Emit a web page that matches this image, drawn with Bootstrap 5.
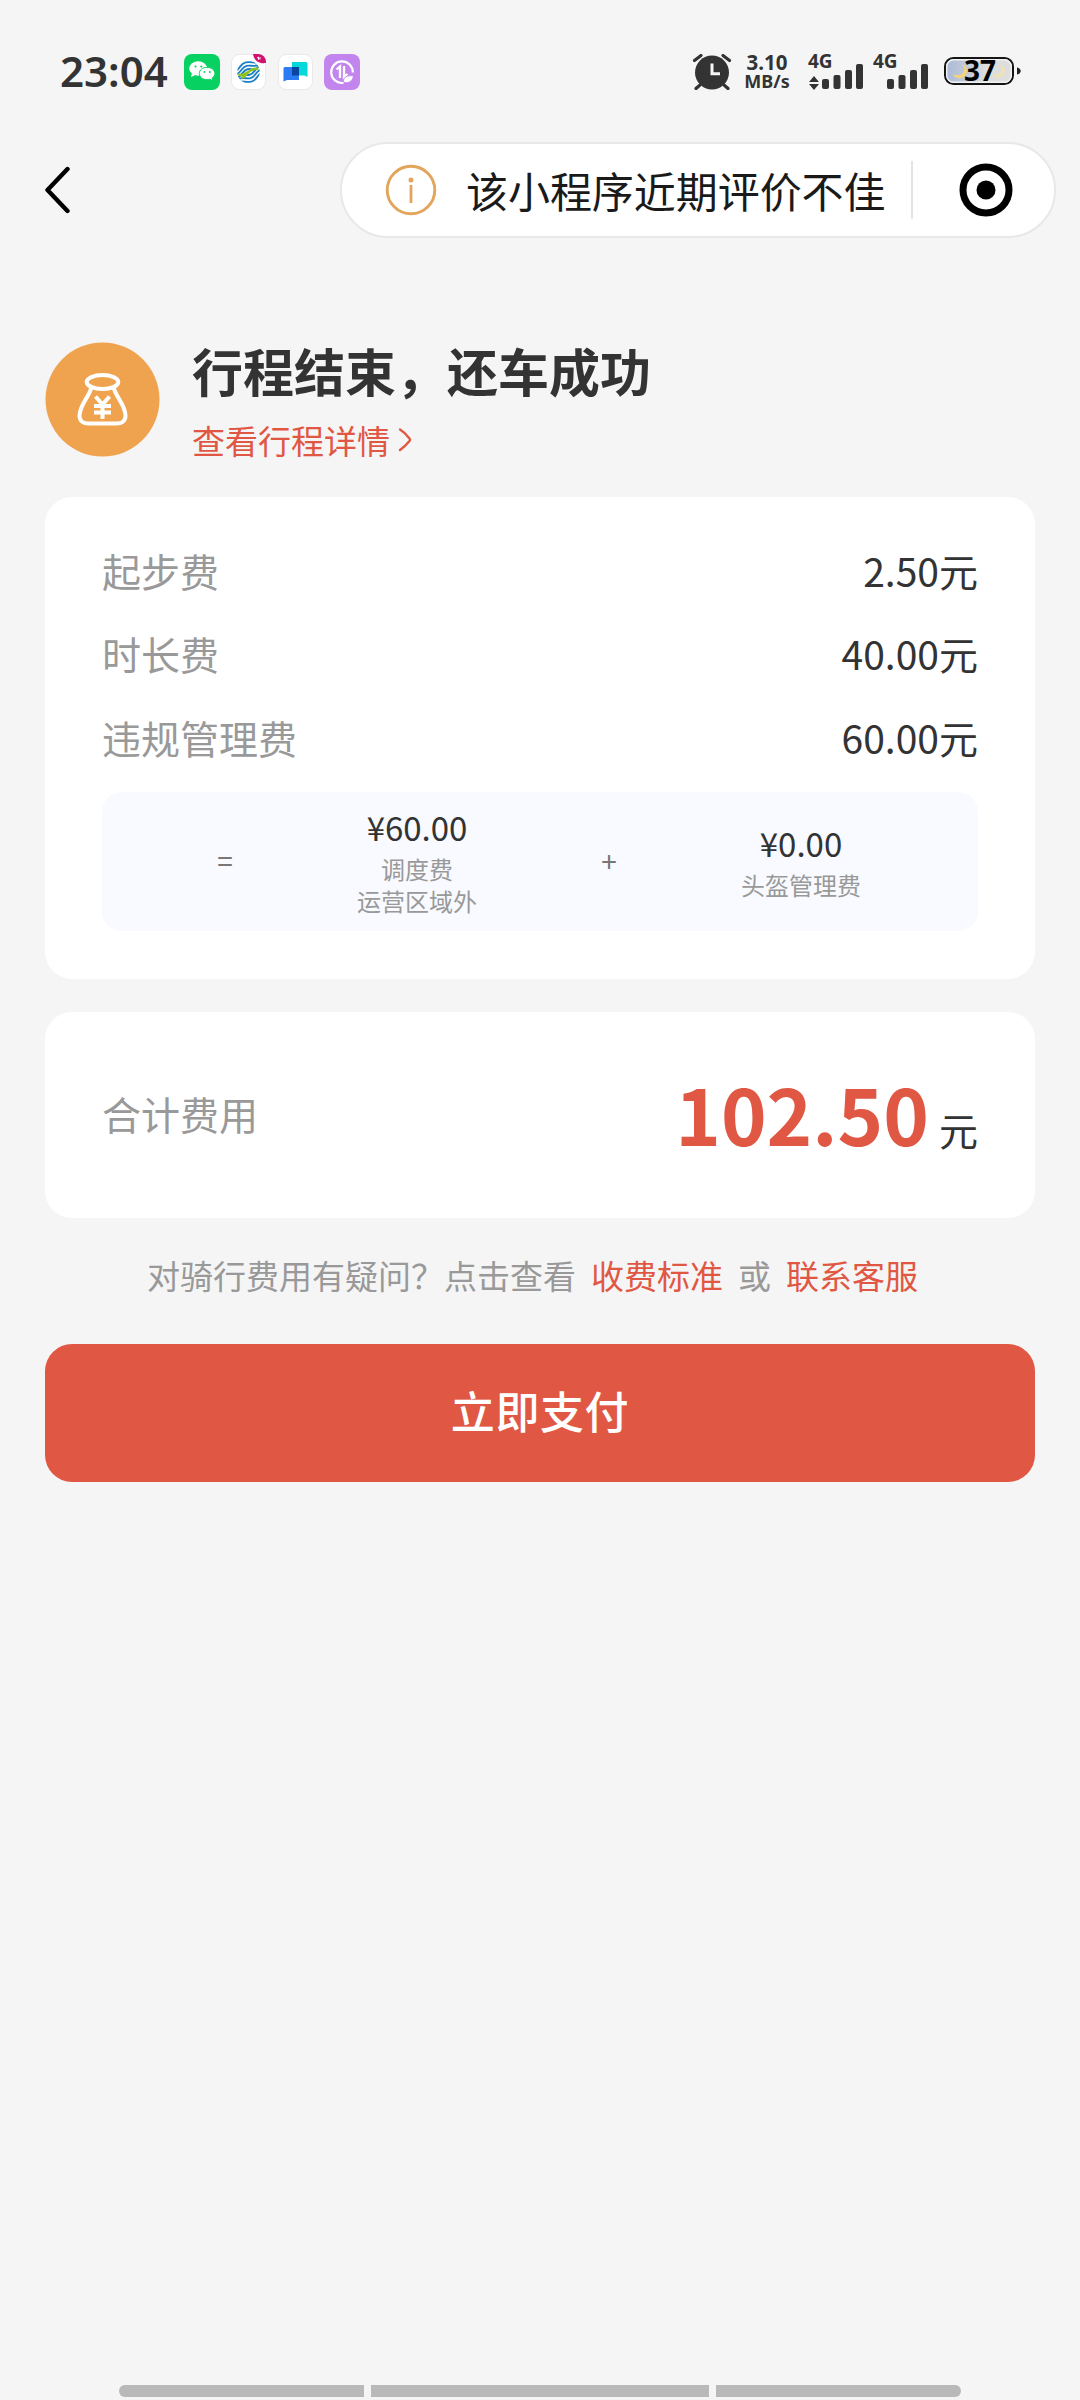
<!DOCTYPE html>
<html lang="zh-CN">
<head>
<meta charset="utf-8">
<meta name="viewport" content="width=device-width, initial-scale=1">
<title>行程结束</title>
<link href="https://cdn.jsdelivr.net/npm/bootstrap@5.3.0/dist/css/bootstrap.min.css" rel="stylesheet">
<style>
  body { background:#f5f5f5; color:#333; font-family:"Noto Sans CJK SC",sans-serif; width:1080px; height:2400px; overflow:hidden; }
  .screen { height:2400px; }
  .status { height:142px; padding:54px 59px 0 60px; font-family:"Noto Sans",sans-serif; }
  .status svg { display:block; flex:none; }
  .clock { font-size:42px; line-height:34px; font-weight:600; width:124px; letter-spacing:0; }
  .apps { gap:11px; }
  .rate { width:52px; font-weight:700; margin-left:9px; }
  .rate-n { font-size:20.5px; line-height:17px; }
  .rate-u { font-size:18px; line-height:18px; margin-top:1px; }
  .signal { margin:-8px 0 0 15px; }
  .signal + .signal { margin-left:9px; }
  .battery { margin:-6px 0 0 15px; }
  .topbar { height:96px; padding:0 24px 0 44px; }
  .capsule { width:716px; height:96px; border:2px solid #e8e8e8; border-radius:48px; background:#fff; padding-left:43px; }
  .capsule-text { font-size:42px; line-height:60px; color:#1a1a1a; margin-left:29px; white-space:nowrap; letter-spacing:-.05px; }
  .capsule-line { width:2px; height:58px; background:#e4e4e4; margin-left:25px; }
  .target { margin-right:41px; }
  .content { padding:104px 45px 0 45px; }
  .headline { font-size:51px; line-height:62px; font-weight:700; margin:-3px 0 0; }
  .red { color:#e05843; }
  .detail { font-size:33px; line-height:48px; margin-top:15px; text-decoration:none; }
  .panel { background:#fff; border-radius:27px; border:0; padding:0 57px; }
  .fees { height:482px; margin-top:33px; padding-top:31px; }
  .fee { height:83.5px; font-size:39px; }
  .muted { color:#999; }
  .formula { height:139px; border-radius:20px; background:#f8faff; padding-left:27px; margin-top:13px; }
  .cell { width:192px; text-align:center; padding-bottom:3px; }
  .op { font-size:28px; color:#777; line-height:36px; }
  .price { font-size:33px; line-height:51px; }
  .sub { font-size:24px; line-height:32.5px; color:#999; }
  .total { height:206px; margin-top:33px; font-size:39px; padding-bottom:4px; }
  .amount { font-size:77.5px; line-height:90px; font-weight:700; }
  .yuan { font-size:39px; line-height:60px; margin-left:10px; }
  .hint { font-size:33px; line-height:44px; margin-top:35px; gap:15px; padding-left:102px; white-space:nowrap; }
  .hint a { text-decoration:none; }
  .pay { width:990px; height:138px; background:#e05843; color:#fff; border:0; border-radius:27px; font-size:44px; font-weight:500; margin-top:47px; letter-spacing:.6px; padding:0 0 6px; }
  .pay:hover { background:#d24f3b; color:#fff; }
  .navhint { gap:7px; padding:0 119px 3px 119px; }
  .navhint span { height:12px; background:#b9b9b9; width:245px; }
  .navhint span:nth-child(1) { border-radius:6px 0 0 6px; }
  .navhint span:nth-child(2) { width:338px; }
  .navhint span:nth-child(3) { border-radius:0 6px 6px 0; }
</style>
</head>
<body>
<div class="screen d-flex flex-column">
  <header class="status d-flex justify-content-between align-items-start">
    <div class="d-flex">
      <div class="clock">23:04</div>
      <div class="apps d-flex">
        <svg width="36" height="36" viewBox="0 0 36 36"><rect width="36" height="36" rx="8" fill="#07d160"/><g fill="#fff"><ellipse cx="14.2" cy="14.5" rx="9" ry="7.2"/><path d="M8 19l-1 4 4.500-2z"/></g><g fill="#fff" stroke="#07d160" stroke-width="1"><path d="M23 13.300c-4.400 0-7.700 2.800-7.700 6.200s3.300 6.200 7.700 6.200c1 0 1.900-.2 2.800-.4l2.900 1.500-.6-2.700c1.800-1.200 2.800-2.800 2.800-4.600 0-3.400-3.500-6.200-7.900-6.200z"/></g><g fill="#07d160"><circle cx="11.500" cy="12.500" r="1.100"/><circle cx="17.300" cy="12.500" r="1.100"/><circle cx="20.500" cy="18" r="1"/><circle cx="25.800" cy="18" r="1"/></g></svg>
        <svg width="36" height="36" viewBox="0 0 36 36"><rect x=".5" y=".5" width="34" height="35" rx="8" fill="#fff" stroke="#e9e9e9"/><clipPath id="globe"><circle cx="17.500" cy="18" r="11.300"/></clipPath><g fill="none" clip-path="url(#globe)" stroke-width="1.900" transform="rotate(-14 17.500 18)"><g stroke="#1c80c4"><path d="M5 14c5-1 6-6 12-6 4 0 7 2 12 3M5 17.500c6-1 7-6 12-6 4 0 6 3 13 2M5 21c6-1 7-6 12-6 3 0 4 1.500 6 1.500M30 15c-6 1-7 6-12 6-3 0-4-1.500-6-1.500M30 18.500c-6 1-7 6-12 6-4 0-6-3-13-2M30 22c-5 1-6 6-12 6-4 0-7-2-12-3"/></g><g stroke="#8fc31f" stroke-width="2.400"><path d="M7 18c5 3 7 .5 10 0s5-3 11-1M9 22c5 0 6-3.500 9-4"/></g></g><path d="M22 0h5a8 8 0 0 1 8 8v1c-8 1-12-3-13-9z" fill="#d3106f"/><path d="M26 4l1.500-1v2.500l1.500-2v2" stroke="#fff" stroke-width=".9" fill="none"/></svg>
        <svg width="35" height="36" viewBox="0 0 35 36"><rect x=".5" y=".5" width="34" height="35" rx="8" fill="#fff" stroke="#e9e9e9"/><path d="M14 8h14a1.500 1.500 0 0 1 1.500 1.500V23l-3-1.500H14z" fill="#05d8d8"/><path d="M7 13h14v13H9l-3.500 1.500V14.500A1.500 1.500 0 0 1 7 13z" fill="#2b7bf5"/><path d="M14 13h7v8.500h-7z" fill="#0846a0"/></svg>
        <svg width="36" height="36" viewBox="0 0 36 36"><rect width="36" height="36" rx="8" fill="#c285ee"/><path d="M28.800 18.500A10.800 10.800 0 1 0 19.500 28.900" fill="none" stroke="#fff" stroke-width="2.200"/><path d="M12.500 15.500l3.500-3V24M20 12v11l3.500-3" fill="none" stroke="#fff" stroke-width="2.300"/><path d="M19.500 28c-.5-5 4-7 10-6-1 5-5 8-10 6z" fill="#fff" stroke="#c285ee" stroke-width=".8"/></svg>
      </div>
    </div>
    <div class="d-flex">
      <svg width="40" height="36" viewBox="0 0 40 36"><g fill="none" stroke="#333" stroke-width="3.200" stroke-linecap="round"><path d="M2.500 6.500l6.500-5M31 1.500l6.500 5M8 31l-4 3.500M32 31l4 3.500"/></g><circle cx="20" cy="18.500" r="17" fill="#333"/><path d="M20 9.500v10.200h8" fill="none" stroke="#f5f5f5" stroke-width="3"/></svg>
      <div class="rate text-center"><div class="rate-n">3.10</div><div class="rate-u">MB/s</div></div>
      <svg class="signal" width="56" height="45" viewBox="0 -8 56 45"><text x="0" y="13.500" font-size="19" font-weight="700" fill="#333">4G</text><path d="M1 28l5-6 5 6zM1 30h10l-5 6z" fill="#333"/><g fill="#333"><rect x="14" y="25" width="7" height="10" rx="2"/><rect x="25.500" y="21" width="7" height="14" rx="2"/><rect x="37" y="16" width="7" height="19" rx="2"/><rect x="48" y="10" width="7" height="25" rx="2"/></g></svg>
      <svg class="signal" width="56" height="45" viewBox="0 -8 56 45"><text x="0" y="13.500" font-size="19" font-weight="700" fill="#333">4G</text><g fill="#333"><rect x="14" y="25" width="7" height="10" rx="2"/><rect x="25.500" y="21" width="7" height="14" rx="2"/><rect x="37" y="16" width="7" height="19" rx="2"/><rect x="48" y="10" width="7" height="25" rx="2"/></g></svg>
      <svg class="battery" width="77" height="46" viewBox="0 -6 77 46"><defs><linearGradient id="sky"><stop offset="0" stop-color="#aab9d6"/><stop offset=".45" stop-color="#cbd1dd"/><stop offset=".6" stop-color="#dedede"/></linearGradient></defs><rect x="1" y="4" width="68" height="26" rx="8.500" fill="url(#sky)" stroke="#151515" stroke-width="2"/><rect x="2.700" y="5.700" width="64.600" height="22.600" rx="7" fill="none" stroke="#f2f2f2" stroke-width="1.400"/><path d="M18 10c6 7-1 14-9 10 1 6 14 6 14-3 0-3-2-6-5-7z" fill="#f4d37b"/><path d="M56 10c5 7-1 13-8 10 2 5 13 5 13-3 0-3-2-6-5-7z" fill="#efe2b8"/><path d="M73 13.500c5 1 5 6 0 7z" fill="#222"/><text x="36" y="27" text-anchor="middle" font-size="28" font-weight="700" fill="#000">37</text></svg>
    </div>
  </header>

  <nav class="topbar d-flex align-items-center justify-content-between">
    <svg width="28" height="48" viewBox="0 0 28 48"><path d="M23.500 3L3.500 24l20 21" fill="none" stroke="#000" stroke-width="4.400" stroke-linecap="round" stroke-linejoin="round"/></svg>
    <div class="capsule d-flex align-items-center">
      <svg width="52" height="52" viewBox="0 0 52 52"><circle cx="26" cy="26" r="23.800" fill="none" stroke="#e3a55b" stroke-width="2.900"/><circle cx="26" cy="16" r="2.500" fill="#e3a55b"/><path d="M26 21v18" stroke="#e3a55b" stroke-width="2.800"/></svg>
      <span class="capsule-text">该小程序近期评价不佳</span>
      <span class="capsule-line"></span>
      <svg class="target ms-auto" width="54" height="54" viewBox="0 0 54 54"><circle cx="27" cy="27" r="23" fill="none" stroke="#000" stroke-width="7"/><circle cx="27" cy="27" r="9.500" fill="#000"/></svg>
    </div>
  </nav>

  <main class="content flex-grow-1">
    <div class="d-flex align-items-start">
      <svg width="115" height="115" viewBox="0 0 115 115"><circle cx="57.500" cy="57.500" r="57" fill="#f0a34f"/><g fill="none" stroke="#fff" stroke-width="4"><ellipse cx="57.500" cy="40" rx="15.800" ry="7"/><path d="M46 46.500C44 55 34.500 63 34.500 74c0 5 4 7.500 9 7.500h28c5 0 9-2.500 9-7.500C80.500 63 71 55 69 46.500"/><path d="M50.500 54.500l7 8 7-8M49 64h17M49 70.500h17M57.500 62v15" stroke-width="4"/></g></svg>
      <div class="ms-4 ps-2">
        <h1 class="headline">行程结束，还车成功</h1>
        <a class="detail red d-flex align-items-center" href="#">查看行程详情<svg class="ms-2" width="15" height="24" viewBox="0 0 15 24"><path d="M2 1.500q5 3 9.500 9 1 1 0 2.500-4.500 5.500-9.500 9" fill="none" stroke="#e05843" stroke-width="2.400" stroke-linecap="round"/></svg></a>
      </div>
    </div>

    <section class="panel card fees">
      <div class="fee d-flex justify-content-between align-items-center"><span class="muted">起步费</span><span>2.50元</span></div>
      <div class="fee d-flex justify-content-between align-items-center"><span class="muted">时长费</span><span>40.00元</span></div>
      <div class="fee d-flex justify-content-between align-items-center"><span class="muted">违规管理费</span><span>60.00元</span></div>
      <div class="formula d-flex align-items-center">
        <div class="cell op">=</div>
        <div class="cell"><div class="price">¥60.00</div><div class="sub">调度费</div><div class="sub">运营区域外</div></div>
        <div class="cell op">+</div>
        <div class="cell"><div class="price">¥0.00</div><div class="sub">头盔管理费</div></div>
      </div>
    </section>

    <section class="panel card total flex-row justify-content-between align-items-center">
      <span class="muted">合计费用</span>
      <div class="d-flex align-items-baseline"><span class="amount red">102.50</span><span class="yuan">元</span></div>
    </section>

    <div class="hint d-flex muted"><span>对骑行费用有疑问？点击查看</span><a class="red" href="#">收费标准</a><span>或</span><a class="red" href="#">联系客服</a></div>
    <button type="button" class="btn pay">立即支付</button>
  </main>

  <footer class="navhint d-flex"><span></span><span></span><span></span></footer>
</div>
<script src="https://cdn.jsdelivr.net/npm/bootstrap@5.3.0/dist/js/bootstrap.bundle.min.js"></script>
</body>
</html>
